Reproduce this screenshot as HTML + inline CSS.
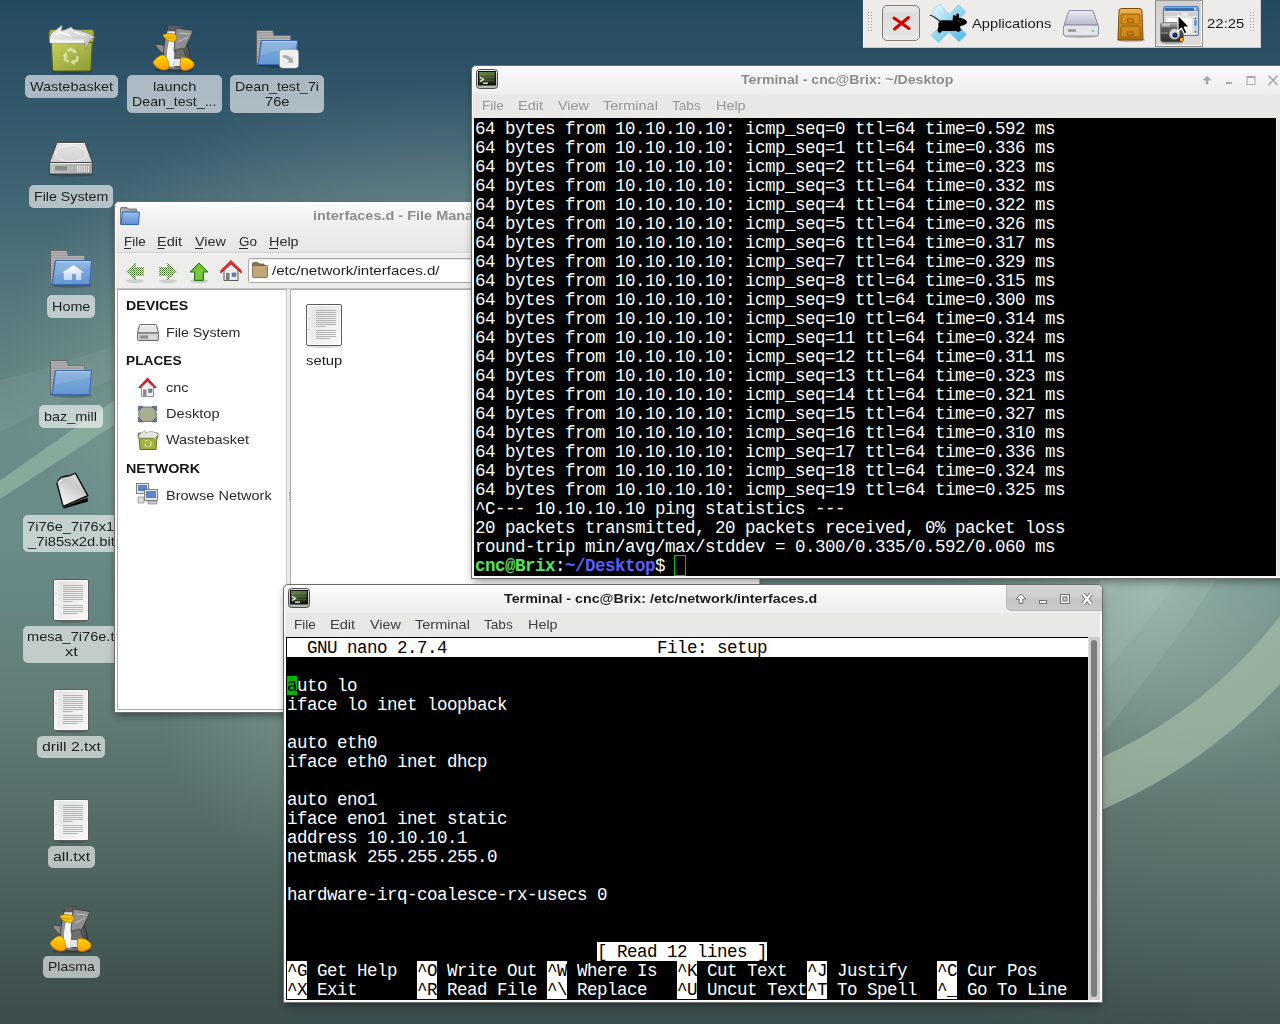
<!DOCTYPE html><html><head><meta charset="utf-8"><style>

*{box-sizing:border-box}
html,body{margin:0;padding:0;width:1280px;height:1024px;overflow:hidden}
body{position:relative;font-family:'Liberation Sans', sans-serif;background:#3c4e4d}
.a{position:absolute}
.t{position:absolute;white-space:pre;font-family:'Liberation Sans', sans-serif}
.m{position:absolute;white-space:pre;font-family:'Liberation Mono', monospace;font-size:17.5px;letter-spacing:-0.5px;line-height:19px;color:#fff}

</style></head><body>
<svg class="a" style="left:0;top:0" width="1280" height="1024" viewBox="0 0 1280 1024">
<defs>
<linearGradient id="bgv" x1="0" y1="0" x2="0" y2="1024" gradientUnits="userSpaceOnUse">
<stop offset="0.0000" stop-color="#244a62"/>
<stop offset="0.0439" stop-color="#2a4f65"/>
<stop offset="0.1416" stop-color="#385d6e"/>
<stop offset="0.2881" stop-color="#54777d"/>
<stop offset="0.3516" stop-color="#5f8282"/>
<stop offset="0.4199" stop-color="#6a8d8a"/>
<stop offset="0.5273" stop-color="#6a8c88"/>
<stop offset="0.5811" stop-color="#668784"/>
<stop offset="0.6787" stop-color="#637d78"/>
<stop offset="0.8350" stop-color="#516763"/>
<stop offset="0.9863" stop-color="#3c4e4d"/>
<stop offset="1.0000" stop-color="#3b4d4c"/>
</linearGradient>
<radialGradient id="glow" cx="1150" cy="590" r="210" gradientUnits="userSpaceOnUse">
<stop offset="0" stop-color="#b4d0c0" stop-opacity="0.5"/>
<stop offset="1" stop-color="#a8c4b4" stop-opacity="0"/>
</radialGradient>
<radialGradient id="glow2" cx="1280" cy="720" r="420" gradientUnits="userSpaceOnUse"><stop offset="0" stop-color="#c8e0d0" stop-opacity="0.12"/><stop offset="0.6" stop-color="#c8e0d0" stop-opacity="0.06"/><stop offset="1" stop-color="#c8e0d0" stop-opacity="0"/></radialGradient>
<radialGradient id="glow3" cx="310" cy="715" r="150" gradientUnits="userSpaceOnUse"><stop offset="0" stop-color="#d8f0e0" stop-opacity="0.16"/><stop offset="1" stop-color="#d8f0e0" stop-opacity="0"/></radialGradient>
<radialGradient id="glow4" cx="480" cy="360" r="560" gradientUnits="userSpaceOnUse" gradientTransform="translate(480 360) scale(1 0.589) translate(-480 -360)"><stop offset="0" stop-color="#f0f0d0" stop-opacity="0.4"/><stop offset="0.85" stop-color="#f0f0d0" stop-opacity="0"/></radialGradient>
<filter id="soft" x="-5%" y="-5%" width="110%" height="110%"><feGaussianBlur stdDeviation="0.6"/></filter>
</defs>
<rect width="1280" height="1024" fill="url(#bgv)"/>
<rect width="1280" height="1024" fill="url(#glow)"/>
<rect width="1280" height="1024" fill="url(#glow2)"/>
<rect width="1280" height="1024" fill="url(#glow3)"/>
<rect width="1280" height="1024" fill="url(#glow4)"/>
<path d="M0 380 C40 370 80 358 130 340 L130 372 C80 392 40 412 0 432Z" fill="#ffffff" fill-opacity="0.05"/>
<path d="M-20 494.5 L0 480.5 L300 270 L300 304 L0 499 L-20 512Z" fill="#8fb2a0" fill-opacity="0.8" filter="url(#soft)"/>
<path d="M1100 738 C1130 700 1170 650 1219 576 L1100 576Z" fill="#ffffff" fill-opacity="0.07" filter="url(#soft)"/>
<path d="M1100 677 C1125 648 1155 615 1181 576 L1100 576Z" fill="#ffffff" fill-opacity="0.05" filter="url(#soft)"/>
<path d="M1100 609 C1108 600 1117 590 1125 576 L1100 576Z" fill="#ffffff" fill-opacity="0.04"/>
<path d="M1000 790 A467 467 0 0 0 1310 572 L1310 648 A514.2 514.2 0 0 1 1000 840.9 Z" fill="#a2baa6" fill-opacity="0.72" filter="url(#soft)"/>
</svg>
<svg class="a" style="left:44px;top:22px;overflow:visible" width="56" height="52" viewBox="0 0 56 52"><defs><linearGradient id="trg" x1="0" y1="0" x2="1" y2="1"><stop offset="0" stop-color="#c6cf5c"/><stop offset="1" stop-color="#8e9a34"/></linearGradient>
<linearGradient id="tpg" x1="0" y1="0" x2="1" y2="1"><stop offset="0" stop-color="#fafafa"/><stop offset="1" stop-color="#b8b8b8"/></linearGradient></defs>
<ellipse cx="28" cy="49.5" rx="20" ry="2" fill="#000" fill-opacity="0.2"/>
<rect x="5" y="7.5" width="45" height="13" rx="2.5" fill="#a7b23e" stroke="#56620e" stroke-width="1"/>
<path d="M7.3 20.5 L48.3 20.5 L47 47 Q46.8 49 44.8 49 L10.6 49 Q8.6 49 8.5 47 Z" fill="url(#trg)" stroke="#56620e" stroke-width="1"/>
<path d="M5.5 17 C6 12 9 9 12 8 L18 3 L17.5 9 C20 8 24 7 27 5 C28 6.5 30 7.5 32 8 C36 8 40 10 44 11 C46.5 12 48.5 13.5 50.5 15 L46.5 18 C44.5 20 43.5 24 42 27.5 L40.5 21 L6 21 Z" fill="url(#tpg)" stroke="#8a8a8a" stroke-width="0.7"/>
<path d="M12 12 C16 10 22 11 26 14 M30 10 C34 12 38 12 42 14" stroke="#fff" stroke-width="1.2" fill="none"/>
<rect x="6" y="17.5" width="34" height="3.5" fill="#f2f2f2"/>
<g fill="none" stroke="#dfe5b0" stroke-width="2.6" stroke-opacity="0.85">
<path d="M23.5 29 L27 27 L30.5 29.5"/><path d="M33.5 34 L33 38.5 L29 40"/><path d="M24.5 40 L21 37.5 L21.5 33"/></g>
<g fill="#dfe5b0" fill-opacity="0.85"><path d="M30 26.5 L33.5 31 L28.5 31Z"/><path d="M30.5 43 L26 40 L30.5 37.5Z"/><path d="M18.5 34.5 L21.5 30 L24 34.5Z"/></g></svg>
<div class="a" style="left:25px;top:75px;width:93px;height:23px;border-radius:5px;background:rgba(255,255,255,0.6)"></div>
<div class="t" style="left:30.00px;top:79.67px;font-size:13.39px;line-height:13.39px;font-weight:normal;color:#1e1e1e;transform:scaleX(1.0795);transform-origin:0 0;">Wastebasket</div>
<svg class="a" style="left:148px;top:22px;overflow:visible" width="52" height="52" viewBox="0 0 52 52"><defs><linearGradient id="pgf" x1="0" y1="0" x2="0" y2="1"><stop offset="0" stop-color="#ffd800"/><stop offset="1" stop-color="#ff9c00"/></linearGradient>
<linearGradient id="pgb" x1="0" y1="0" x2="1" y2="0"><stop offset="0" stop-color="#9a9a9a"/><stop offset="1" stop-color="#4a4a4a"/></linearGradient></defs>
<ellipse cx="27" cy="48" rx="20" ry="2.5" fill="#000" fill-opacity="0.2"/>
<path d="M7 22 L18 23.5 L16 32 C12 30 9 26 7 22Z" fill="#8c8c8c" stroke="#333" stroke-width="0.6"/>
<path d="M19 9 C20 4 25 3 29 3.5 C33 4 35 7 35 11 L38 20 C42 28 43 36 42 43 C40 47 36 48 28 48 C21 48 17 46 16 40 C15 30 16 20 19 9Z" fill="url(#pgb)" stroke="#2a2a2a" stroke-width="0.8"/>
<path d="M20 4.5 C23 3 31 3 34 6 L34 10 L20 10Z" fill="#5c5c5c"/>
<path d="M19 9 L31 9 L31 13 L19 13Z" fill="#e6e6e6" stroke="#555" stroke-width="0.6"/>
<path d="M21 19 C19 27 18 36 20 44 L26 45 C28 36 29 27 28 19Z" fill="#f6f6f6"/>
<path d="M28 6 L45 8.5 L43 14 L35 30 L28 33 L26 28 Z" fill="#8e8e8e" stroke="#3a3a3a" stroke-width="0.8"/>
<path d="M31 11 L42 12 M30 20 L40 15" stroke="#d8d8d8" stroke-width="0.7"/>
<path d="M27 28 L35 26 L38 35 L33 45 L26 44 Z" fill="#6e6e6e" stroke="#333" stroke-width="0.6"/>
<rect x="26" y="37" width="6" height="7" fill="#e8e8e8"/>
<path d="M15 13 C18 11 25 11 28 13 C29 16 28 19 26 19.5 C21 19.5 17 18 15 13Z" fill="#f6c400" stroke="#b07800" stroke-width="0.7"/>
<path d="M17 15.5 L27 16" stroke="#b07800" stroke-width="0.6"/>
<path d="M5 40 C8 36 12 33 15 33 C19 34 21 40 21 44 C21 47 19 48 15 48 C10 47 6 44 5 40Z" fill="url(#pgf)" stroke="#c07000" stroke-width="0.6"/>
<path d="M33 36 C37 35 41 36 43 38 C46 40 47 43 45 45 C42 48 37 49 34 48 C32 46 32 40 33 36Z" fill="url(#pgf)" stroke="#c07000" stroke-width="0.6"/></svg>
<div class="a" style="left:127px;top:75px;width:95px;height:38px;border-radius:5px;background:rgba(255,255,255,0.6)"></div>
<div class="t" style="left:152.78px;top:79.67px;font-size:13.39px;line-height:13.39px;font-weight:normal;color:#1e1e1e;transform:scaleX(1.1011);transform-origin:0 0;">launch</div>
<div class="t" style="left:132.21px;top:94.67px;font-size:13.39px;line-height:13.39px;font-weight:normal;color:#1e1e1e;transform:scaleX(1.0619);transform-origin:0 0;">Dean_test_...</div>
<svg class="a" style="left:256px;top:30px;overflow:visible" width="42" height="37" viewBox="0 0 42 37"><defs><linearGradient id="fdb" x1="0" y1="0" x2="0" y2="1"><stop offset="0" stop-color="#86b0de"/><stop offset="1" stop-color="#6497d2"/></linearGradient>
<clipPath id="fbk"><path d="M0.5 1.5 Q0.5 0.5 1.5 0.5 L16.5 0.5 L18 5.5 L33.5 5.5 Q34.5 5.5 34.5 6.5 L34.5 11 L5 11 L2 34.5 L0.5 34.5 Z"/></clipPath></defs>
<ellipse cx="22" cy="35.5" rx="20" ry="2.2" fill="#000" fill-opacity="0.22"/>
<path d="M0.5 1.5 Q0.5 0.5 1.5 0.5 L16.5 0.5 L18 5.5 L33.5 5.5 Q34.5 5.5 34.5 6.5 L34.5 11 L5 11 L2 34.5 L0.5 34.5 Z" fill="#8e8e8e" stroke="#5e5e5e" stroke-width="0.8"/>
<g clip-path="url(#fbk)" stroke="#c8c8c8" stroke-width="0.7"><line x1="1" y1="1.5" x2="35" y2="1.5"/><line x1="1" y1="3.1" x2="35" y2="3.1"/><line x1="1" y1="4.7" x2="35" y2="4.7"/><line x1="1" y1="6.3" x2="35" y2="6.3"/><line x1="1" y1="7.9" x2="35" y2="7.9"/><line x1="1" y1="9.5" x2="35" y2="9.5"/><line x1="1" y1="11.1" x2="35" y2="11.1"/><line x1="1" y1="12.7" x2="35" y2="12.7"/><line x1="1" y1="14.3" x2="35" y2="14.3"/><line x1="1" y1="15.9" x2="35" y2="15.9"/><line x1="1" y1="17.5" x2="35" y2="17.5"/><line x1="1" y1="19.1" x2="35" y2="19.1"/><line x1="1" y1="20.7" x2="35" y2="20.7"/><line x1="1" y1="22.3" x2="35" y2="22.3"/><line x1="1" y1="23.9" x2="35" y2="23.9"/><line x1="1" y1="25.5" x2="35" y2="25.5"/><line x1="1" y1="27.1" x2="35" y2="27.1"/><line x1="1" y1="28.7" x2="35" y2="28.7"/><line x1="1" y1="30.3" x2="35" y2="30.3"/><line x1="1" y1="31.9" x2="35" y2="31.9"/></g>
<path d="M5.5 10.5 L41.5 10.5 L39.5 34.5 L2 34.5 Z" fill="url(#fdb)" stroke="#3766b2" stroke-width="1" stroke-linejoin="round"/>
<path d="M6.3 11.6 L40.4 11.6" stroke="#c4daf2" stroke-width="0.9"/>
<path d="M6.2 12 L40.5 12 L40 17 C30 19 16 22 4.8 25 Z" fill="#fff" fill-opacity="0.1"/>
<rect x="23.5" y="19.5" width="19" height="18.5" rx="3" fill="#efefef" stroke="#9c9c9c" stroke-width="0.8"/>
<rect x="24.5" y="20.5" width="17" height="16.5" rx="2.5" fill="none" stroke="#fff" stroke-width="1"/>
<path d="M26.5 25.5 Q31 23.5 35 28 L36 26.5 L37.5 33 L31.5 32.5 L33 30.8 Q30 27.5 27 27.5 Z" fill="#ababab"/></svg>
<div class="a" style="left:230px;top:75px;width:94px;height:38px;border-radius:5px;background:rgba(255,255,255,0.6)"></div>
<div class="t" style="left:234.97px;top:79.67px;font-size:13.39px;line-height:13.39px;font-weight:normal;color:#1e1e1e;transform:scaleX(1.0654);transform-origin:0 0;">Dean_test_7i</div>
<div class="t" style="left:264.73px;top:94.67px;font-size:13.39px;line-height:13.39px;font-weight:normal;color:#1e1e1e;transform:scaleX(1.0986);transform-origin:0 0;">76e</div>
<svg class="a" style="left:44px;top:136px;overflow:visible" width="56" height="46" viewBox="0 0 56 46"><defs><linearGradient id="drg" x1="0" y1="0" x2="0" y2="1"><stop offset="0" stop-color="#e4e4e4"/><stop offset="1" stop-color="#d2d2d2"/></linearGradient>
<linearGradient id="drf" x1="0" y1="0" x2="1" y2="0"><stop offset="0" stop-color="#c2c2c2"/><stop offset="1" stop-color="#a6a6a6"/></linearGradient></defs>
<ellipse cx="27" cy="38.5" rx="23" ry="2.2" fill="#000" fill-opacity="0.22"/>
<path d="M13 6.5 L41 6.5 L48.5 26.5 L5.5 26.5 Z" fill="url(#drg)" stroke="#3c3c3c" stroke-width="0.9" stroke-linejoin="round"/>
<path d="M13.6 7.5 L40.4 7.5" stroke="#fff" stroke-width="1"/>
<ellipse cx="27" cy="17.5" rx="15.5" ry="8" fill="none" stroke="#f4f4f4" stroke-width="0.8"/>
<rect x="5.5" y="26.5" width="43" height="11.5" rx="1.5" fill="url(#drf)" stroke="#3c3c3c" stroke-width="0.9"/>
<path d="M6.5 27.5 L47.5 27.5" stroke="#f0f0f0" stroke-width="1"/>
<rect x="11" y="30" width="12" height="4.5" fill="#8a8a8a"/>
<g stroke="#f2f2f2" stroke-width="0.8"><line x1="33.5" y1="29.5" x2="33.5" y2="36"/><line x1="35.7" y1="29.5" x2="35.7" y2="36"/><line x1="37.9" y1="29.5" x2="37.9" y2="36"/><line x1="40.1" y1="29.5" x2="40.1" y2="36"/><line x1="42.3" y1="29.5" x2="42.3" y2="36"/><line x1="44.5" y1="29.5" x2="44.5" y2="36"/></g></svg>
<div class="a" style="left:29px;top:185px;width:84px;height:23px;border-radius:5px;background:rgba(255,255,255,0.6)"></div>
<div class="t" style="left:33.82px;top:189.67px;font-size:13.39px;line-height:13.39px;font-weight:normal;color:#1e1e1e;transform:scaleX(1.0633);transform-origin:0 0;">File System</div>
<svg class="a" style="left:50px;top:250px;overflow:visible" width="42" height="37" viewBox="0 0 42 37"><defs><linearGradient id="fdb" x1="0" y1="0" x2="0" y2="1"><stop offset="0" stop-color="#86b0de"/><stop offset="1" stop-color="#6497d2"/></linearGradient>
<clipPath id="fbk"><path d="M0.5 1.5 Q0.5 0.5 1.5 0.5 L16.5 0.5 L18 5.5 L33.5 5.5 Q34.5 5.5 34.5 6.5 L34.5 11 L5 11 L2 34.5 L0.5 34.5 Z"/></clipPath></defs>
<ellipse cx="22" cy="35.5" rx="20" ry="2.2" fill="#000" fill-opacity="0.22"/>
<path d="M0.5 1.5 Q0.5 0.5 1.5 0.5 L16.5 0.5 L18 5.5 L33.5 5.5 Q34.5 5.5 34.5 6.5 L34.5 11 L5 11 L2 34.5 L0.5 34.5 Z" fill="#8e8e8e" stroke="#5e5e5e" stroke-width="0.8"/>
<g clip-path="url(#fbk)" stroke="#c8c8c8" stroke-width="0.7"><line x1="1" y1="1.5" x2="35" y2="1.5"/><line x1="1" y1="3.1" x2="35" y2="3.1"/><line x1="1" y1="4.7" x2="35" y2="4.7"/><line x1="1" y1="6.3" x2="35" y2="6.3"/><line x1="1" y1="7.9" x2="35" y2="7.9"/><line x1="1" y1="9.5" x2="35" y2="9.5"/><line x1="1" y1="11.1" x2="35" y2="11.1"/><line x1="1" y1="12.7" x2="35" y2="12.7"/><line x1="1" y1="14.3" x2="35" y2="14.3"/><line x1="1" y1="15.9" x2="35" y2="15.9"/><line x1="1" y1="17.5" x2="35" y2="17.5"/><line x1="1" y1="19.1" x2="35" y2="19.1"/><line x1="1" y1="20.7" x2="35" y2="20.7"/><line x1="1" y1="22.3" x2="35" y2="22.3"/><line x1="1" y1="23.9" x2="35" y2="23.9"/><line x1="1" y1="25.5" x2="35" y2="25.5"/><line x1="1" y1="27.1" x2="35" y2="27.1"/><line x1="1" y1="28.7" x2="35" y2="28.7"/><line x1="1" y1="30.3" x2="35" y2="30.3"/><line x1="1" y1="31.9" x2="35" y2="31.9"/></g>
<path d="M5.5 10.5 L41.5 10.5 L39.5 34.5 L2 34.5 Z" fill="url(#fdb)" stroke="#3766b2" stroke-width="1" stroke-linejoin="round"/>
<path d="M6.3 11.6 L40.4 11.6" stroke="#c4daf2" stroke-width="0.9"/>
<path d="M6.2 12 L40.5 12 L40 17 C30 19 16 22 4.8 25 Z" fill="#fff" fill-opacity="0.1"/>
<defs><linearGradient id="hmg" x1="0" y1="0" x2="0" y2="1"><stop offset="0" stop-color="#fff"/><stop offset="1" stop-color="#c2d6ee"/></linearGradient></defs><path d="M23.5 15 L34 22.5 L31.2 22.5 L31.2 30 L26 30 L26 24 L22 24 L22 30 L13.8 30 L13.8 22.5 L12.3 22.5 Z" fill="url(#hmg)"/></svg>
<div class="a" style="left:47px;top:295px;width:48px;height:23px;border-radius:5px;background:rgba(255,255,255,0.6)"></div>
<div class="t" style="left:51.80px;top:299.67px;font-size:13.39px;line-height:13.39px;font-weight:normal;color:#1e1e1e;transform:scaleX(1.0750);transform-origin:0 0;">Home</div>
<svg class="a" style="left:50px;top:360px;overflow:visible" width="42" height="37" viewBox="0 0 42 37"><defs><linearGradient id="fdb" x1="0" y1="0" x2="0" y2="1"><stop offset="0" stop-color="#86b0de"/><stop offset="1" stop-color="#6497d2"/></linearGradient>
<clipPath id="fbk"><path d="M0.5 1.5 Q0.5 0.5 1.5 0.5 L16.5 0.5 L18 5.5 L33.5 5.5 Q34.5 5.5 34.5 6.5 L34.5 11 L5 11 L2 34.5 L0.5 34.5 Z"/></clipPath></defs>
<ellipse cx="22" cy="35.5" rx="20" ry="2.2" fill="#000" fill-opacity="0.22"/>
<path d="M0.5 1.5 Q0.5 0.5 1.5 0.5 L16.5 0.5 L18 5.5 L33.5 5.5 Q34.5 5.5 34.5 6.5 L34.5 11 L5 11 L2 34.5 L0.5 34.5 Z" fill="#8e8e8e" stroke="#5e5e5e" stroke-width="0.8"/>
<g clip-path="url(#fbk)" stroke="#c8c8c8" stroke-width="0.7"><line x1="1" y1="1.5" x2="35" y2="1.5"/><line x1="1" y1="3.1" x2="35" y2="3.1"/><line x1="1" y1="4.7" x2="35" y2="4.7"/><line x1="1" y1="6.3" x2="35" y2="6.3"/><line x1="1" y1="7.9" x2="35" y2="7.9"/><line x1="1" y1="9.5" x2="35" y2="9.5"/><line x1="1" y1="11.1" x2="35" y2="11.1"/><line x1="1" y1="12.7" x2="35" y2="12.7"/><line x1="1" y1="14.3" x2="35" y2="14.3"/><line x1="1" y1="15.9" x2="35" y2="15.9"/><line x1="1" y1="17.5" x2="35" y2="17.5"/><line x1="1" y1="19.1" x2="35" y2="19.1"/><line x1="1" y1="20.7" x2="35" y2="20.7"/><line x1="1" y1="22.3" x2="35" y2="22.3"/><line x1="1" y1="23.9" x2="35" y2="23.9"/><line x1="1" y1="25.5" x2="35" y2="25.5"/><line x1="1" y1="27.1" x2="35" y2="27.1"/><line x1="1" y1="28.7" x2="35" y2="28.7"/><line x1="1" y1="30.3" x2="35" y2="30.3"/><line x1="1" y1="31.9" x2="35" y2="31.9"/></g>
<path d="M5.5 10.5 L41.5 10.5 L39.5 34.5 L2 34.5 Z" fill="url(#fdb)" stroke="#3766b2" stroke-width="1" stroke-linejoin="round"/>
<path d="M6.3 11.6 L40.4 11.6" stroke="#c4daf2" stroke-width="0.9"/>
<path d="M6.2 12 L40.5 12 L40 17 C30 19 16 22 4.8 25 Z" fill="#fff" fill-opacity="0.1"/>
</svg>
<div class="a" style="left:39px;top:405px;width:64px;height:23px;border-radius:5px;background:rgba(255,255,255,0.6)"></div>
<div class="t" style="left:44.48px;top:409.67px;font-size:13.39px;line-height:13.39px;font-weight:normal;color:#1e1e1e;transform:scaleX(1.0800);transform-origin:0 0;">baz_mill</div>
<svg class="a" style="left:48px;top:466px;overflow:visible" width="48" height="48" viewBox="0 0 48 48"><defs><linearGradient id="bfg" x1="0.2" y1="1" x2="0.8" y2="0"><stop offset="0" stop-color="#ffffff"/><stop offset="0.6" stop-color="#c8c8c8"/><stop offset="1" stop-color="#e0e0e0"/></linearGradient></defs>
<path d="M15 41.5 L39.5 31.5 L40 35.5 L16 42.5 Z" fill="#000"/>
<path d="M9 17.5 C10 14.5 12 12 14 11 L22 9.5 L27.5 7.2 L39.8 29.6 L15.2 40.3 Z" fill="url(#bfg)" stroke="#000" stroke-width="1.3" stroke-linejoin="round"/>
<path d="M9.3 17 C11 14.5 12.5 13 14 12.5 L14.5 15.5 C12.5 16.5 10.5 17.5 9.3 17Z" fill="#fff" stroke="#888" stroke-width="0.5"/></svg>
<div class="a" style="left:23px;top:515px;width:97px;height:37px;border-radius:5px;background:rgba(255,255,255,0.6)"></div>
<div class="t" style="left:27.34px;top:519.67px;font-size:13.39px;line-height:13.39px;font-weight:normal;color:#1e1e1e;transform:scaleX(1.0961);transform-origin:0 0;">7i76e_7i76x1</div>
<div class="t" style="left:27.50px;top:534.67px;font-size:13.39px;line-height:13.39px;font-weight:normal;color:#1e1e1e;transform:scaleX(1.1027);transform-origin:0 0;">_7i85sx2d.bit</div>
<svg class="a" style="left:53px;top:579px;overflow:visible" width="36" height="42" viewBox="0 0 36 42"><defs><linearGradient id="tdg" x1="0" y1="0" x2="1" y2="1"><stop offset="0" stop-color="#e2e2e2"/><stop offset="1" stop-color="#f8f8f8"/></linearGradient></defs>
<ellipse cx="18" cy="42" rx="16" ry="2" fill="#000" fill-opacity="0.15"/>
<rect x="0.5" y="0.5" width="35" height="41" rx="1.5" fill="#fff" stroke="#5c5c5c" stroke-width="1"/>
<rect x="2" y="2" width="32" height="38" fill="url(#tdg)"/>
<rect x="2" y="2" width="3.5" height="38" fill="#fff" fill-opacity="0.35"/>
<g stroke="#b4b4b4" stroke-width="1"><line x1="10" y1="6.5" x2="30" y2="6.5"/><line x1="10" y1="8.5" x2="30" y2="8.5"/><line x1="10" y1="10.5" x2="30" y2="10.5"/><line x1="10" y1="12.5" x2="30" y2="12.5"/><line x1="10" y1="14.5" x2="30" y2="14.5"/><line x1="10" y1="16.5" x2="30" y2="16.5"/><line x1="10" y1="18.5" x2="30" y2="18.5"/><line x1="10" y1="20.5" x2="30" y2="20.5"/><line x1="10" y1="22.5" x2="19.5" y2="22.5"/><line x1="10" y1="26.5" x2="30" y2="26.5"/><line x1="10" y1="28.5" x2="30" y2="28.5"/><line x1="10" y1="30.5" x2="30" y2="30.5"/><line x1="10" y1="32.5" x2="30" y2="32.5"/><line x1="10" y1="34.5" x2="24.5" y2="34.5"/></g>
<rect x="2.5" y="14" width="1" height="1" fill="#aaa"/><rect x="2.5" y="25" width="1" height="1" fill="#aaa"/></svg>
<div class="a" style="left:23px;top:626px;width:97px;height:37px;border-radius:5px;background:rgba(255,255,255,0.6)"></div>
<div class="t" style="left:27.22px;top:629.67px;font-size:13.39px;line-height:13.39px;font-weight:normal;color:#1e1e1e;transform:scaleX(1.0892);transform-origin:0 0;">mesa_7i76e.t</div>
<div class="t" style="left:64.60px;top:644.67px;font-size:13.39px;line-height:13.39px;font-weight:normal;color:#1e1e1e;transform:scaleX(1.2281);transform-origin:0 0;">xt</div>
<svg class="a" style="left:53px;top:689px;overflow:visible" width="36" height="42" viewBox="0 0 36 42"><defs><linearGradient id="tdg" x1="0" y1="0" x2="1" y2="1"><stop offset="0" stop-color="#e2e2e2"/><stop offset="1" stop-color="#f8f8f8"/></linearGradient></defs>
<ellipse cx="18" cy="42" rx="16" ry="2" fill="#000" fill-opacity="0.15"/>
<rect x="0.5" y="0.5" width="35" height="41" rx="1.5" fill="#fff" stroke="#5c5c5c" stroke-width="1"/>
<rect x="2" y="2" width="32" height="38" fill="url(#tdg)"/>
<rect x="2" y="2" width="3.5" height="38" fill="#fff" fill-opacity="0.35"/>
<g stroke="#b4b4b4" stroke-width="1"><line x1="10" y1="6.5" x2="30" y2="6.5"/><line x1="10" y1="8.5" x2="30" y2="8.5"/><line x1="10" y1="10.5" x2="30" y2="10.5"/><line x1="10" y1="12.5" x2="30" y2="12.5"/><line x1="10" y1="14.5" x2="30" y2="14.5"/><line x1="10" y1="16.5" x2="30" y2="16.5"/><line x1="10" y1="18.5" x2="30" y2="18.5"/><line x1="10" y1="20.5" x2="30" y2="20.5"/><line x1="10" y1="22.5" x2="19.5" y2="22.5"/><line x1="10" y1="26.5" x2="30" y2="26.5"/><line x1="10" y1="28.5" x2="30" y2="28.5"/><line x1="10" y1="30.5" x2="30" y2="30.5"/><line x1="10" y1="32.5" x2="30" y2="32.5"/><line x1="10" y1="34.5" x2="24.5" y2="34.5"/></g>
<rect x="2.5" y="14" width="1" height="1" fill="#aaa"/><rect x="2.5" y="25" width="1" height="1" fill="#aaa"/></svg>
<div class="a" style="left:37px;top:736px;width:68px;height:22px;border-radius:5px;background:rgba(255,255,255,0.6)"></div>
<div class="t" style="left:41.57px;top:739.67px;font-size:13.39px;line-height:13.39px;font-weight:normal;color:#1e1e1e;transform:scaleX(1.1806);transform-origin:0 0;">drill 2.txt</div>
<svg class="a" style="left:53px;top:799px;overflow:visible" width="36" height="42" viewBox="0 0 36 42"><defs><linearGradient id="tdg" x1="0" y1="0" x2="1" y2="1"><stop offset="0" stop-color="#e2e2e2"/><stop offset="1" stop-color="#f8f8f8"/></linearGradient></defs>
<ellipse cx="18" cy="42" rx="16" ry="2" fill="#000" fill-opacity="0.15"/>
<rect x="0.5" y="0.5" width="35" height="41" rx="1.5" fill="#fff" stroke="#5c5c5c" stroke-width="1"/>
<rect x="2" y="2" width="32" height="38" fill="url(#tdg)"/>
<rect x="2" y="2" width="3.5" height="38" fill="#fff" fill-opacity="0.35"/>
<g stroke="#b4b4b4" stroke-width="1"><line x1="10" y1="6.5" x2="30" y2="6.5"/><line x1="10" y1="8.5" x2="30" y2="8.5"/><line x1="10" y1="10.5" x2="30" y2="10.5"/><line x1="10" y1="12.5" x2="30" y2="12.5"/><line x1="10" y1="14.5" x2="30" y2="14.5"/><line x1="10" y1="16.5" x2="30" y2="16.5"/><line x1="10" y1="18.5" x2="30" y2="18.5"/><line x1="10" y1="20.5" x2="30" y2="20.5"/><line x1="10" y1="22.5" x2="19.5" y2="22.5"/><line x1="10" y1="26.5" x2="30" y2="26.5"/><line x1="10" y1="28.5" x2="30" y2="28.5"/><line x1="10" y1="30.5" x2="30" y2="30.5"/><line x1="10" y1="32.5" x2="30" y2="32.5"/><line x1="10" y1="34.5" x2="24.5" y2="34.5"/></g>
<rect x="2.5" y="14" width="1" height="1" fill="#aaa"/><rect x="2.5" y="25" width="1" height="1" fill="#aaa"/></svg>
<div class="a" style="left:48px;top:846px;width:47px;height:22px;border-radius:5px;background:rgba(255,255,255,0.6)"></div>
<div class="t" style="left:52.90px;top:849.67px;font-size:13.39px;line-height:13.39px;font-weight:normal;color:#1e1e1e;transform:scaleX(1.1906);transform-origin:0 0;">all.txt</div>
<svg class="a" style="left:45px;top:903px;overflow:visible" width="52" height="52" viewBox="0 0 52 52"><defs><linearGradient id="pgf" x1="0" y1="0" x2="0" y2="1"><stop offset="0" stop-color="#ffd800"/><stop offset="1" stop-color="#ff9c00"/></linearGradient>
<linearGradient id="pgb" x1="0" y1="0" x2="1" y2="0"><stop offset="0" stop-color="#9a9a9a"/><stop offset="1" stop-color="#4a4a4a"/></linearGradient></defs>
<ellipse cx="27" cy="48" rx="20" ry="2.5" fill="#000" fill-opacity="0.2"/>
<path d="M7 22 L18 23.5 L16 32 C12 30 9 26 7 22Z" fill="#8c8c8c" stroke="#333" stroke-width="0.6"/>
<path d="M19 9 C20 4 25 3 29 3.5 C33 4 35 7 35 11 L38 20 C42 28 43 36 42 43 C40 47 36 48 28 48 C21 48 17 46 16 40 C15 30 16 20 19 9Z" fill="url(#pgb)" stroke="#2a2a2a" stroke-width="0.8"/>
<path d="M20 4.5 C23 3 31 3 34 6 L34 10 L20 10Z" fill="#5c5c5c"/>
<path d="M19 9 L31 9 L31 13 L19 13Z" fill="#e6e6e6" stroke="#555" stroke-width="0.6"/>
<path d="M21 19 C19 27 18 36 20 44 L26 45 C28 36 29 27 28 19Z" fill="#f6f6f6"/>
<path d="M28 6 L45 8.5 L43 14 L35 30 L28 33 L26 28 Z" fill="#8e8e8e" stroke="#3a3a3a" stroke-width="0.8"/>
<path d="M31 11 L42 12 M30 20 L40 15" stroke="#d8d8d8" stroke-width="0.7"/>
<path d="M27 28 L35 26 L38 35 L33 45 L26 44 Z" fill="#6e6e6e" stroke="#333" stroke-width="0.6"/>
<rect x="26" y="37" width="6" height="7" fill="#e8e8e8"/>
<path d="M15 13 C18 11 25 11 28 13 C29 16 28 19 26 19.5 C21 19.5 17 18 15 13Z" fill="#f6c400" stroke="#b07800" stroke-width="0.7"/>
<path d="M17 15.5 L27 16" stroke="#b07800" stroke-width="0.6"/>
<path d="M5 40 C8 36 12 33 15 33 C19 34 21 40 21 44 C21 47 19 48 15 48 C10 47 6 44 5 40Z" fill="url(#pgf)" stroke="#c07000" stroke-width="0.6"/>
<path d="M33 36 C37 35 41 36 43 38 C46 40 47 43 45 45 C42 48 37 49 34 48 C32 46 32 40 33 36Z" fill="url(#pgf)" stroke="#c07000" stroke-width="0.6"/></svg>
<div class="a" style="left:43px;top:956px;width:57px;height:22px;border-radius:5px;background:rgba(255,255,255,0.6)"></div>
<div class="t" style="left:48.09px;top:959.67px;font-size:13.39px;line-height:13.39px;font-weight:normal;color:#1e1e1e;transform:scaleX(1.0486);transform-origin:0 0;">Plasma</div>
<div class="a" style="left:114px;top:201px;width:644px;height:512px;border:1px solid #6c6c6c;border-radius:5px 5px 0 0;background:#fdfdfd;box-shadow:0 4px 8px -2px rgba(0,0,0,0.45);"></div><div class="a" style="left:116px;top:203px;width:640px;height:50px;border-radius:4px 4px 0 0;background:linear-gradient(#fafafa,#f1f1f1 30%,#ececec 60%,#e6e6e5);border-top:1px solid #fff;border-bottom:1px solid #cfcfcf"></div><svg class="a" style="left:120px;top:207px;overflow:visible" width="20" height="18" viewBox="0 0 20 18"><defs><linearGradient id="ffg" x1="0" y1="0" x2="0" y2="1"><stop offset="0" stop-color="#9cc0ec"/><stop offset="1" stop-color="#5a8fd2"/></linearGradient></defs>
<path d="M0.5 1.5 Q0.5 0.5 1.5 0.5 L7 0.5 L8.5 2 L16.5 2 L16.5 6 L0.5 6Z" fill="#9a9a9a" stroke="#6a6a6a" stroke-width="0.8"/>
<path d="M0.5 1.5 L0.5 17.5 L3 17.5 L3 5 L17 5" fill="#b8b8b8" stroke="#6a6a6a" stroke-width="0.8"/>
<path d="M2.5 5 L19.5 5 L18.5 17.5 L1 17.5 Z" fill="url(#ffg)" stroke="#3168b0" stroke-width="1"/></svg><div class="t" style="left:312.80px;top:210.14px;font-size:12.36px;line-height:12.36px;font-weight:bold;color:#8d8d8d;transform:scaleX(1.1719);transform-origin:0 0;">interfaces.d - File Manager</div><div class="t" style="left:123.70px;top:235.07px;font-size:13.39px;line-height:13.39px;font-weight:normal;color:#2b2b2b;transform:scaleX(1.0083);transform-origin:0 0;">File</div><div class="t" style="left:157.20px;top:235.07px;font-size:13.39px;line-height:13.39px;font-weight:normal;color:#2b2b2b;transform:scaleX(1.0911);transform-origin:0 0;">Edit</div><div class="t" style="left:194.70px;top:235.07px;font-size:13.39px;line-height:13.39px;font-weight:normal;color:#2b2b2b;transform:scaleX(1.0719);transform-origin:0 0;">View</div><div class="t" style="left:238.70px;top:235.07px;font-size:13.39px;line-height:13.39px;font-weight:normal;color:#2b2b2b;transform:scaleX(1.0093);transform-origin:0 0;">Go</div><div class="t" style="left:268.70px;top:235.07px;font-size:13.39px;line-height:13.39px;font-weight:normal;color:#2b2b2b;transform:scaleX(1.0764);transform-origin:0 0;">Help</div><svg class="a" style="left:0;top:0;overflow:visible" width="1" height="1"><rect x="124" y="248" width="7" height="1" fill="#2b2b2b"/><rect x="157.5" y="248" width="7" height="1" fill="#2b2b2b"/><rect x="195" y="248" width="8" height="1" fill="#2b2b2b"/><rect x="239" y="248" width="9" height="1" fill="#2b2b2b"/><rect x="269" y="248" width="9" height="1" fill="#2b2b2b"/></svg><div class="a" style="left:116px;top:253px;width:640px;height:36px;background:#ededec;border-top:1px solid #fbfbfb;border-bottom:1px solid #c4c4c4"></div><svg class="a" style="left:0;top:0;overflow:visible" width="1" height="1"><defs><pattern id="dotp" width="2" height="2" patternUnits="userSpaceOnUse"><rect width="1" height="1" fill="#3a6a1e"/><rect x="1" y="1" width="1" height="1" fill="#6aa040"/></pattern></defs>
<ellipse cx="135" cy="281" rx="9" ry="2" fill="#000" fill-opacity="0.12"/>
<path d="M126 271.5 L136 262 L136 267 L144 267 L144 276 L136 276 L136 281 Z" fill="url(#dotp)"/>
<ellipse cx="168" cy="281" rx="9" ry="2" fill="#000" fill-opacity="0.12"/>
<path d="M177 271.5 L167 262 L167 267 L159 267 L159 276 L167 276 L167 281 Z" fill="url(#dotp)"/>
<ellipse cx="199" cy="281" rx="9" ry="2" fill="#000" fill-opacity="0.15"/>
<path d="M199 263 L208 272 L203.5 272 L203.5 280.5 L194.5 280.5 L194.5 272 L190 272 Z" fill="#62b82e" stroke="#2e7a12" stroke-width="1"/><path d="M199 265.5 L205 271 L202 271 L202 279 L196 279 L196 271 L193 271 Z" fill="#8ad04a" fill-opacity="0.6"/>
<path d="M224 270 L231 263.5 L238 270 L238 280.5 L224 280.5 Z" fill="#ececec" stroke="#5a5a5a" stroke-width="1"/>
<path d="M220.8 270.5 L231 260.5 L241.2 270.5 L241.2 273 L231 263.8 L220.8 273 Z" fill="#e83030" stroke="#a01010" stroke-width="0.8" stroke-linejoin="round"/>
<rect x="226" y="273" width="3.5" height="7.5" fill="#7c7c7c"/>
<rect x="232" y="273" width="4" height="3.5" fill="#5b86c4" stroke="#2a4a7a" stroke-width="0.4"/></svg><div class="a" style="left:248px;top:258px;width:520px;height:25px;background:#fff;border:1px solid #a9a9a9;border-radius:1.5px;box-shadow:inset 0 1px 1px rgba(0,0,0,0.08)"></div><svg class="a" style="left:252px;top:262px;overflow:visible" width="16" height="16" viewBox="0 0 16 16"><path d="M0.5 2 Q0.5 0.5 2 0.5 L6 0.5 L7.5 2 L12 2 L12 4 L0.5 4Z" fill="#8a7354" stroke="#6e5a3c" stroke-width="0.8"/>
<rect x="0.5" y="3.5" width="15" height="12" rx="1" fill="#c2a778" stroke="#6e5a3c" stroke-width="0.8"/></svg><div class="t" style="left:272.40px;top:263.67px;font-size:13.39px;line-height:13.39px;font-weight:normal;color:#1e1e1e;transform:scaleX(1.1267);transform-origin:0 0;">/etc/network/interfaces.d/</div><div class="a" style="left:117px;top:289px;width:170px;height:421px;background:#fff;border:1px solid #a9a9a9;border-right-color:#c7c7c7"></div><div class="a" style="left:287px;top:289px;width:4px;height:421px;background:#ededec"></div><div class="a" style="left:289px;top:492px;width:1px;height:8px;border-left:1px dotted #999"></div><div class="a" style="left:290px;top:289px;width:470px;height:421px;background:#fff;border:1px solid #a9a9a9"></div><div class="t" style="left:125.80px;top:299.27px;font-size:13.39px;line-height:13.39px;font-weight:bold;color:#141414;transform:scaleX(1.0607);transform-origin:0 0;">DEVICES</div><svg class="a" style="left:137px;top:324px;overflow:visible" width="22" height="17" viewBox="0 0 22 17"><path d="M3.5 0.5 L18.5 0.5 Q19.2 0.5 19.5 1.2 L21.5 9 L0.5 9 L2.5 1.2 Q2.8 0.5 3.5 0.5Z" fill="#e6e6e6" stroke="#5a5a5a" stroke-width="0.9"/>
<path d="M3.5 1.6 L18.5 1.6" stroke="#fff" stroke-width="0.8"/>
<rect x="0.5" y="9" width="21" height="7.5" rx="1.2" fill="#cdcdcd" stroke="#5a5a5a" stroke-width="0.9"/>
<rect x="3" y="11.5" width="8" height="3" fill="#8e8e8e"/>
<g stroke="#f4f4f4" stroke-width="0.6"><line x1="13.0" y1="11.5" x2="13.0" y2="15"/><line x1="14.4" y1="11.5" x2="14.4" y2="15"/><line x1="15.8" y1="11.5" x2="15.8" y2="15"/><line x1="17.2" y1="11.5" x2="17.2" y2="15"/><line x1="18.6" y1="11.5" x2="18.6" y2="15"/></g></svg><div class="t" style="left:165.70px;top:325.87px;font-size:13.39px;line-height:13.39px;font-weight:normal;color:#2a2a2a;transform:scaleX(1.0633);transform-origin:0 0;">File System</div><div class="t" style="left:125.80px;top:354.47px;font-size:13.39px;line-height:13.39px;font-weight:bold;color:#141414;transform:scaleX(1.0247);transform-origin:0 0;">PLACES</div><svg class="a" style="left:138px;top:377px;overflow:visible" width="19" height="20" viewBox="0 0 19 20"><path d="M0.8 10.5 L9.5 1 L18.2 10.5 L15.5 10.5 L9.5 4.5 L3.5 10.5 Z" fill="#e51c1c" stroke="#a00" stroke-width="0.8" stroke-linejoin="round"/>
<path d="M3.5 10 L9.5 4.5 L15.5 10 L15.5 19.5 L3.5 19.5 Z" fill="#f0f0f0" stroke="#7a7a7a" stroke-width="0.8"/>
<rect x="5" y="12.5" width="3.5" height="7" fill="#8c8c8c"/><rect x="10.5" y="12" width="3.5" height="3.5" fill="#5b86c4" stroke="#345" stroke-width="0.3"/></svg><div class="t" style="left:165.70px;top:380.87px;font-size:13.39px;line-height:13.39px;font-weight:normal;color:#2a2a2a;transform:scaleX(1.0815);transform-origin:0 0;">cnc</div><svg class="a" style="left:138px;top:406px;overflow:visible" width="19" height="16.5" viewBox="0 0 19 16.5"><path d="M4 1 L15 1 Q18.5 4 18.5 8 Q18.5 12 15 15.5 L4 15.5 Q0.5 12 0.5 8 Q0.5 4 4 1Z" fill="#a9ad92" stroke="#5f6350" stroke-width="0.8"/>
<path d="M0.3 0.3 L5 0.3 L0.3 5Z M18.7 0.3 L14 0.3 L18.7 5Z M0.3 16 L5 16 L0.3 11.3Z M18.7 16 L14 16 L18.7 11.3Z" fill="#5a7aa6" stroke="#2c4468" stroke-width="0.5"/></svg><div class="t" style="left:165.70px;top:406.97px;font-size:13.39px;line-height:13.39px;font-weight:normal;color:#2a2a2a;transform:scaleX(1.0915);transform-origin:0 0;">Desktop</div><svg class="a" style="left:137px;top:430px;overflow:visible" width="22" height="20" viewBox="0 0 22 20"><path d="M2 7 L20 7 L19 19.5 L3 19.5 Z" fill="#a4b03c" stroke="#56620e" stroke-width="0.9"/>
<rect x="1" y="3" width="20" height="5" rx="1" fill="#a0aa3a" stroke="#56620e" stroke-width="0.8"/>
<path d="M1.5 6.5 C3 3 6 2 8 0.5 L9 3 C11 2 13 1 15 1.5 C17 2 20 3 21.5 4.5 L19 7 L18.5 11 L17 8 L2 8Z" fill="#e4e4e4" stroke="#8a8a8a" stroke-width="0.5"/>
<circle cx="11" cy="13.5" r="3.2" fill="none" stroke="#d6dca0" stroke-width="1.4" stroke-dasharray="4 1.6"/></svg><div class="t" style="left:165.70px;top:433.07px;font-size:13.39px;line-height:13.39px;font-weight:normal;color:#2a2a2a;transform:scaleX(1.0795);transform-origin:0 0;">Wastebasket</div><div class="t" style="left:125.80px;top:461.97px;font-size:13.39px;line-height:13.39px;font-weight:bold;color:#141414;transform:scaleX(1.0712);transform-origin:0 0;">NETWORK</div><svg class="a" style="left:136px;top:483px;overflow:visible" width="22" height="22" viewBox="0 0 22 22"><rect x="0.5" y="0.5" width="12" height="10" fill="#e4e4e4" stroke="#666" stroke-width="0.8"/><rect x="2" y="2" width="9" height="6" fill="#5b86c4"/>
<rect x="8.5" y="6.5" width="13" height="11" fill="#e4e4e4" stroke="#666" stroke-width="0.8"/><rect x="10" y="8" width="10" height="7" fill="#5b86c4"/>
<rect x="2" y="14" width="6" height="6" fill="#ddd" stroke="#777" stroke-width="0.6"/><rect x="12" y="18" width="9" height="3" fill="#ccc" stroke="#777" stroke-width="0.6"/></svg><div class="t" style="left:165.70px;top:488.57px;font-size:13.39px;line-height:13.39px;font-weight:normal;color:#2a2a2a;transform:scaleX(1.0849);transform-origin:0 0;">Browse Network</div><svg class="a" style="left:306px;top:304px;overflow:visible" width="36" height="42" viewBox="0 0 36 42"><defs><linearGradient id="tdg" x1="0" y1="0" x2="1" y2="1"><stop offset="0" stop-color="#e2e2e2"/><stop offset="1" stop-color="#f8f8f8"/></linearGradient></defs>
<ellipse cx="18" cy="42" rx="16" ry="2" fill="#000" fill-opacity="0.15"/>
<rect x="0.5" y="0.5" width="35" height="41" rx="1.5" fill="#fff" stroke="#5c5c5c" stroke-width="1"/>
<rect x="2" y="2" width="32" height="38" fill="url(#tdg)"/>
<rect x="2" y="2" width="3.5" height="38" fill="#fff" fill-opacity="0.35"/>
<g stroke="#b4b4b4" stroke-width="1"><line x1="10" y1="6.5" x2="30" y2="6.5"/><line x1="10" y1="8.5" x2="30" y2="8.5"/><line x1="10" y1="10.5" x2="30" y2="10.5"/><line x1="10" y1="12.5" x2="30" y2="12.5"/><line x1="10" y1="14.5" x2="30" y2="14.5"/><line x1="10" y1="16.5" x2="30" y2="16.5"/><line x1="10" y1="18.5" x2="30" y2="18.5"/><line x1="10" y1="20.5" x2="30" y2="20.5"/><line x1="10" y1="22.5" x2="19.5" y2="22.5"/><line x1="10" y1="26.5" x2="30" y2="26.5"/><line x1="10" y1="28.5" x2="30" y2="28.5"/><line x1="10" y1="30.5" x2="30" y2="30.5"/><line x1="10" y1="32.5" x2="30" y2="32.5"/><line x1="10" y1="34.5" x2="24.5" y2="34.5"/></g>
<rect x="2.5" y="14" width="1" height="1" fill="#aaa"/><rect x="2.5" y="25" width="1" height="1" fill="#aaa"/></svg><div class="t" style="left:305.82px;top:354.17px;font-size:13.39px;line-height:13.39px;font-weight:normal;color:#1e1e1e;transform:scaleX(1.1101);transform-origin:0 0;">setup</div>
<div class="a" style="left:471px;top:65px;width:818px;height:514px;border:1px solid #6c6c6c;border-radius:5px 5px 0 0;background:#fdfdfd;box-shadow:0 4px 8px -2px rgba(0,0,0,0.45);"></div><div class="a" style="left:473px;top:67px;width:814px;height:27px;border-radius:4px 4px 0 0;background:linear-gradient(#fbfbfb,#f4f4f4 40%,#eeeeee);border-top:1px solid #fff"></div><div class="a" style="left:473px;top:94px;width:814px;height:24px;background:#e8e8e7"></div><svg class="a" style="left:476px;top:69px;overflow:visible" width="22" height="20" viewBox="0 0 22 20"><defs><linearGradient id="tsg" x1="0" y1="0" x2="0.3" y2="1"><stop offset="0" stop-color="#6f8a4e"/><stop offset="0.5" stop-color="#34481c"/><stop offset="1" stop-color="#0c1206"/></linearGradient>
<linearGradient id="tbz" x1="0" y1="0" x2="0" y2="1"><stop offset="0" stop-color="#e4e4e4"/><stop offset="1" stop-color="#b4b4b4"/></linearGradient></defs>
<rect x="0.5" y="0.5" width="21" height="19" rx="3" fill="url(#tbz)" stroke="#4e4e4e" stroke-width="1"/>
<rect x="2.5" y="2.5" width="17" height="13.5" fill="url(#tsg)" stroke="#111" stroke-width="1"/>
<g stroke="#b8d098" stroke-opacity="0.45" stroke-width="0.6"><line x1="3.5" y1="4.0" x2="18.5" y2="4.0"/><line x1="3.5" y1="5.5" x2="18.5" y2="5.5"/><line x1="3.5" y1="7.0" x2="18.5" y2="7.0"/><line x1="3.5" y1="8.5" x2="18.5" y2="8.5"/><line x1="3.5" y1="10.0" x2="18.5" y2="10.0"/><line x1="3.5" y1="11.5" x2="18.5" y2="11.5"/><line x1="3.5" y1="13.0" x2="18.5" y2="13.0"/></g>
<path d="M4 8.6 L7.6 10.6 L4 12.6" fill="none" stroke="#fff" stroke-width="1.1"/>
<rect x="7" y="13.6" width="5" height="1.2" fill="#fff"/>
<rect x="14" y="17" width="1.2" height="1.2" fill="#7fe060"/></svg><div class="t" style="left:741.40px;top:74.04px;font-size:12.36px;line-height:12.36px;font-weight:bold;color:#8a8a8a;transform:scaleX(1.1415);transform-origin:0 0;text-shadow:0 1px 0 rgba(255,255,255,0.7);">Terminal - cnc@Brix: ~/Desktop</div><div class="t" style="left:482.00px;top:99.27px;font-size:13.39px;line-height:13.39px;font-weight:normal;color:#939799;transform:scaleX(1.0083);transform-origin:0 0;">File</div><div class="t" style="left:518.40px;top:99.27px;font-size:13.39px;line-height:13.39px;font-weight:normal;color:#939799;transform:scaleX(1.0911);transform-origin:0 0;">Edit</div><div class="t" style="left:558.40px;top:99.27px;font-size:13.39px;line-height:13.39px;font-weight:normal;color:#939799;transform:scaleX(1.0719);transform-origin:0 0;">View</div><div class="t" style="left:603.40px;top:99.27px;font-size:13.39px;line-height:13.39px;font-weight:normal;color:#939799;transform:scaleX(1.0859);transform-origin:0 0;">Terminal</div><div class="t" style="left:672.40px;top:99.27px;font-size:13.39px;line-height:13.39px;font-weight:normal;color:#939799;transform:scaleX(1.0176);transform-origin:0 0;">Tabs</div><div class="t" style="left:716.30px;top:99.27px;font-size:13.39px;line-height:13.39px;font-weight:normal;color:#939799;transform:scaleX(1.0764);transform-origin:0 0;">Help</div><svg class="a" style="left:0;top:0;overflow:visible" width="1" height="1"><path d="M1207 76 L1211 80 L1208 80 L1208 84 L1206 84 L1206 80 L1203 80 Z" fill="#a8a8a8" stroke="#a8a8a8" stroke-width="0.6"/><rect x="1226" y="82" width="6" height="2" fill="#a8a8a8"/><rect x="1247" y="76.5" width="8" height="8" fill="none" stroke="#a8a8a8" stroke-width="1"/><rect x="1247" y="76" width="8" height="2" fill="#a8a8a8"/><path d="M1268.5 75.5 L1277.5 85 M1277.5 75.5 L1268.5 85" fill="none" stroke="#a8a8a8" stroke-width="1.6"/></svg><div class="a" style="left:474px;top:118px;width:802px;height:458px;background:#000"></div><div class="a" style="left:1276px;top:118px;width:4px;height:460px;background:#e9e9e9;border-left:1px solid #f8f8f8"></div><div class="a" style="left:472px;top:576px;width:808px;height:2px;background:#fafafa"></div><div class="m" style="left:475px;top:120px">64 bytes from 10.10.10.10: icmp_seq=0 ttl=64 time=0.592 ms
64 bytes from 10.10.10.10: icmp_seq=1 ttl=64 time=0.336 ms
64 bytes from 10.10.10.10: icmp_seq=2 ttl=64 time=0.323 ms
64 bytes from 10.10.10.10: icmp_seq=3 ttl=64 time=0.332 ms
64 bytes from 10.10.10.10: icmp_seq=4 ttl=64 time=0.322 ms
64 bytes from 10.10.10.10: icmp_seq=5 ttl=64 time=0.326 ms
64 bytes from 10.10.10.10: icmp_seq=6 ttl=64 time=0.317 ms
64 bytes from 10.10.10.10: icmp_seq=7 ttl=64 time=0.329 ms
64 bytes from 10.10.10.10: icmp_seq=8 ttl=64 time=0.315 ms
64 bytes from 10.10.10.10: icmp_seq=9 ttl=64 time=0.300 ms
64 bytes from 10.10.10.10: icmp_seq=10 ttl=64 time=0.314 ms
64 bytes from 10.10.10.10: icmp_seq=11 ttl=64 time=0.324 ms
64 bytes from 10.10.10.10: icmp_seq=12 ttl=64 time=0.311 ms
64 bytes from 10.10.10.10: icmp_seq=13 ttl=64 time=0.323 ms
64 bytes from 10.10.10.10: icmp_seq=14 ttl=64 time=0.321 ms
64 bytes from 10.10.10.10: icmp_seq=15 ttl=64 time=0.327 ms
64 bytes from 10.10.10.10: icmp_seq=16 ttl=64 time=0.310 ms
64 bytes from 10.10.10.10: icmp_seq=17 ttl=64 time=0.336 ms
64 bytes from 10.10.10.10: icmp_seq=18 ttl=64 time=0.324 ms
64 bytes from 10.10.10.10: icmp_seq=19 ttl=64 time=0.325 ms
^C--- 10.10.10.10 ping statistics ---
20 packets transmitted, 20 packets received, 0% packet loss
round-trip min/avg/max/stddev = 0.300/0.335/0.592/0.060 ms</div><div class="m" style="left:475px;top:557px;font-weight:bold"><span style="color:#55e455">cnc@Brix</span><span style="color:#fff;font-weight:normal">:</span><span style="color:#5c5cff">~/Desktop</span><span style="color:#fff;font-weight:normal">$ </span></div><div class="a" style="left:674px;top:555px;width:12px;height:21px;border:1px solid #00c000"></div>
<div class="a" style="left:283px;top:584px;width:820px;height:419px;border:1px solid #6c6c6c;border-radius:5px 5px 0 0;background:#fdfdfd;box-shadow:0 4px 8px -2px rgba(0,0,0,0.45);"></div><div class="a" style="left:285px;top:586px;width:816px;height:27px;border-radius:4px 4px 0 0;background:linear-gradient(#fbfbfb,#f4f4f4 40%,#eeeeee);border-top:1px solid #fff"></div><div class="a" style="left:285px;top:613px;width:816px;height:24px;background:#e8e8e7"></div><svg class="a" style="left:288px;top:588px;overflow:visible" width="22" height="20" viewBox="0 0 22 20"><defs><linearGradient id="tsg" x1="0" y1="0" x2="0.3" y2="1"><stop offset="0" stop-color="#6f8a4e"/><stop offset="0.5" stop-color="#34481c"/><stop offset="1" stop-color="#0c1206"/></linearGradient>
<linearGradient id="tbz" x1="0" y1="0" x2="0" y2="1"><stop offset="0" stop-color="#e4e4e4"/><stop offset="1" stop-color="#b4b4b4"/></linearGradient></defs>
<rect x="0.5" y="0.5" width="21" height="19" rx="3" fill="url(#tbz)" stroke="#4e4e4e" stroke-width="1"/>
<rect x="2.5" y="2.5" width="17" height="13.5" fill="url(#tsg)" stroke="#111" stroke-width="1"/>
<g stroke="#b8d098" stroke-opacity="0.45" stroke-width="0.6"><line x1="3.5" y1="4.0" x2="18.5" y2="4.0"/><line x1="3.5" y1="5.5" x2="18.5" y2="5.5"/><line x1="3.5" y1="7.0" x2="18.5" y2="7.0"/><line x1="3.5" y1="8.5" x2="18.5" y2="8.5"/><line x1="3.5" y1="10.0" x2="18.5" y2="10.0"/><line x1="3.5" y1="11.5" x2="18.5" y2="11.5"/><line x1="3.5" y1="13.0" x2="18.5" y2="13.0"/></g>
<path d="M4 8.6 L7.6 10.6 L4 12.6" fill="none" stroke="#fff" stroke-width="1.1"/>
<rect x="7" y="13.6" width="5" height="1.2" fill="#fff"/>
<rect x="14" y="17" width="1.2" height="1.2" fill="#7fe060"/></svg><div class="t" style="left:504.00px;top:593.04px;font-size:12.36px;line-height:12.36px;font-weight:bold;color:#1c1c1c;transform:scaleX(1.1535);transform-origin:0 0;text-shadow:0 1px 0 rgba(255,255,255,0.7);">Terminal - cnc@Brix: /etc/network/interfaces.d</div><div class="t" style="left:294.00px;top:618.27px;font-size:13.39px;line-height:13.39px;font-weight:normal;color:#3c4042;transform:scaleX(1.0083);transform-origin:0 0;">File</div><div class="t" style="left:330.40px;top:618.27px;font-size:13.39px;line-height:13.39px;font-weight:normal;color:#3c4042;transform:scaleX(1.0911);transform-origin:0 0;">Edit</div><div class="t" style="left:370.40px;top:618.27px;font-size:13.39px;line-height:13.39px;font-weight:normal;color:#3c4042;transform:scaleX(1.0719);transform-origin:0 0;">View</div><div class="t" style="left:415.40px;top:618.27px;font-size:13.39px;line-height:13.39px;font-weight:normal;color:#3c4042;transform:scaleX(1.0859);transform-origin:0 0;">Terminal</div><div class="t" style="left:484.40px;top:618.27px;font-size:13.39px;line-height:13.39px;font-weight:normal;color:#3c4042;transform:scaleX(1.0176);transform-origin:0 0;">Tabs</div><div class="t" style="left:528.30px;top:618.27px;font-size:13.39px;line-height:13.39px;font-weight:normal;color:#3c4042;transform:scaleX(1.0764);transform-origin:0 0;">Help</div><div class="a" style="left:1006px;top:585px;width:96px;height:26px;border-radius:0 5px 0 5px;background:linear-gradient(#d6d6d6,#cfcfcf 45%,#c4c4c4 60%,#c9c9c9);border-left:1px solid #b8b8b8;border-bottom:1px solid #b4b4b4"></div><svg class="a" style="left:0;top:0;overflow:visible" width="1" height="1"><path d="M1021 594 L1026 599 L1022.8 599 L1022.8 603.5 L1019.2 603.5 L1019.2 599 L1016 599 Z" fill="#fff" stroke="#6f6f6f" stroke-width="1" stroke-linejoin="round"/><rect x="1039.5" y="600.5" width="7" height="3" fill="#fff" stroke="#6f6f6f" stroke-width="1"/><rect x="1060.5" y="594.5" width="9" height="9" fill="none" stroke="#6f6f6f" stroke-width="1"/><rect x="1061.75" y="595.75" width="6.5" height="6.5" fill="none" stroke="#fff" stroke-width="1.5"/><rect x="1063" y="597" width="4" height="4" fill="#cdcdcd" stroke="#6f6f6f" stroke-width="1"/><path d="M1083 594 L1091 604 M1091 594 L1083 604" fill="none" stroke="#6f6f6f" stroke-width="4.4"/><path d="M1083 594 L1091 604 M1091 594 L1083 604" fill="none" stroke="#fff" stroke-width="2.4"/></svg><div class="a" style="left:286px;top:637px;width:802px;height:363px;background:#000"></div><div class="a" style="left:1088px;top:637px;width:12px;height:363px;background:#cdcdcd;border-left:1px solid #e0e0e0"></div><div class="a" style="left:1091px;top:640px;width:6px;height:357px;background:#7b7e80;border-radius:3px"></div><div class="a" style="left:1100px;top:613px;width:2px;height:387px;background:#fafafa"></div><div class="a" style="left:284px;top:1000px;width:818px;height:2px;background:#fafafa"></div><div class="a" style="left:284px;top:613px;width:2px;height:387px;background:#fafafa"></div><div class="a" style="left:287px;top:638px;width:801px;height:19px;background:#fff"></div><div class="m" style="left:287px;top:639px;color:#000;">  GNU nano 2.7.4                     File: setup</div><div class="m" style="left:287px;top:677px;color:#fff;">auto lo</div><div class="m" style="left:287px;top:696px;color:#fff;">iface lo inet loopback</div><div class="m" style="left:287px;top:734px;color:#fff;">auto eth0</div><div class="m" style="left:287px;top:753px;color:#fff;">iface eth0 inet dhcp</div><div class="m" style="left:287px;top:791px;color:#fff;">auto eno1</div><div class="m" style="left:287px;top:810px;color:#fff;">iface eno1 inet static</div><div class="m" style="left:287px;top:829px;color:#fff;">address 10.10.10.1</div><div class="m" style="left:287px;top:848px;color:#fff;">netmask 255.255.255.0</div><div class="m" style="left:287px;top:886px;color:#fff;">hardware-irq-coalesce-rx-usecs 0</div><div class="a" style="left:287px;top:676px;width:10px;height:19px;background:#00b400"></div><div class="m" style="left:287px;top:677px;color:#000;">a</div><div class="a" style="left:597px;top:942px;width:170px;height:19px;background:#fff"></div><div class="m" style="left:597px;top:943px;color:#000;">[ Read 12 lines ]</div><div class="a" style="left:287px;top:961px;width:20px;height:19px;background:#fff"></div><div class="m" style="left:287px;top:962px;color:#000;">^G</div><div class="m" style="left:317px;top:962px;color:#fff;">Get Help</div><div class="a" style="left:417px;top:961px;width:20px;height:19px;background:#fff"></div><div class="m" style="left:417px;top:962px;color:#000;">^O</div><div class="m" style="left:447px;top:962px;color:#fff;">Write Out</div><div class="a" style="left:547px;top:961px;width:20px;height:19px;background:#fff"></div><div class="m" style="left:547px;top:962px;color:#000;">^W</div><div class="m" style="left:577px;top:962px;color:#fff;">Where Is</div><div class="a" style="left:677px;top:961px;width:20px;height:19px;background:#fff"></div><div class="m" style="left:677px;top:962px;color:#000;">^K</div><div class="m" style="left:707px;top:962px;color:#fff;">Cut Text</div><div class="a" style="left:807px;top:961px;width:20px;height:19px;background:#fff"></div><div class="m" style="left:807px;top:962px;color:#000;">^J</div><div class="m" style="left:837px;top:962px;color:#fff;">Justify</div><div class="a" style="left:937px;top:961px;width:20px;height:19px;background:#fff"></div><div class="m" style="left:937px;top:962px;color:#000;">^C</div><div class="m" style="left:967px;top:962px;color:#fff;">Cur Pos</div><div class="a" style="left:287px;top:980px;width:20px;height:19px;background:#fff"></div><div class="m" style="left:287px;top:981px;color:#000;">^X</div><div class="m" style="left:317px;top:981px;color:#fff;">Exit</div><div class="a" style="left:417px;top:980px;width:20px;height:19px;background:#fff"></div><div class="m" style="left:417px;top:981px;color:#000;">^R</div><div class="m" style="left:447px;top:981px;color:#fff;">Read File</div><div class="a" style="left:547px;top:980px;width:20px;height:19px;background:#fff"></div><div class="m" style="left:547px;top:981px;color:#000;">^\</div><div class="m" style="left:577px;top:981px;color:#fff;">Replace</div><div class="a" style="left:677px;top:980px;width:20px;height:19px;background:#fff"></div><div class="m" style="left:677px;top:981px;color:#000;">^U</div><div class="m" style="left:707px;top:981px;color:#fff;">Uncut Text</div><div class="a" style="left:807px;top:980px;width:20px;height:19px;background:#fff"></div><div class="m" style="left:807px;top:981px;color:#000;">^T</div><div class="m" style="left:837px;top:981px;color:#fff;">To Spell</div><div class="a" style="left:937px;top:980px;width:20px;height:19px;background:#fff"></div><div class="m" style="left:937px;top:981px;color:#000;">^_</div><div class="m" style="left:967px;top:981px;color:#fff;">Go To Line</div>
<div class="a" style="left:863px;top:0;width:398px;height:48px;background:#edecea;border-left:1px solid #fff;border-bottom:1px solid #c9c8c5;border-right:1px solid #d0d0d0"></div><svg class="a" style="left:0;top:0;overflow:visible" width="1" height="1"><rect x="868" y="12" width="1" height="1" fill="#9a9a9a"/><rect x="871" y="12" width="1" height="1" fill="#9a9a9a"/><rect x="868" y="15" width="1" height="1" fill="#9a9a9a"/><rect x="871" y="15" width="1" height="1" fill="#9a9a9a"/><rect x="868" y="18" width="1" height="1" fill="#9a9a9a"/><rect x="871" y="18" width="1" height="1" fill="#9a9a9a"/><rect x="868" y="21" width="1" height="1" fill="#9a9a9a"/><rect x="871" y="21" width="1" height="1" fill="#9a9a9a"/><rect x="868" y="24" width="1" height="1" fill="#9a9a9a"/><rect x="871" y="24" width="1" height="1" fill="#9a9a9a"/><rect x="868" y="27" width="1" height="1" fill="#9a9a9a"/><rect x="871" y="27" width="1" height="1" fill="#9a9a9a"/><rect x="868" y="30" width="1" height="1" fill="#9a9a9a"/><rect x="871" y="30" width="1" height="1" fill="#9a9a9a"/><rect x="1250" y="12" width="1" height="1" fill="#9a9a9a"/><rect x="1253" y="12" width="1" height="1" fill="#9a9a9a"/><rect x="1250" y="15" width="1" height="1" fill="#9a9a9a"/><rect x="1253" y="15" width="1" height="1" fill="#9a9a9a"/><rect x="1250" y="18" width="1" height="1" fill="#9a9a9a"/><rect x="1253" y="18" width="1" height="1" fill="#9a9a9a"/><rect x="1250" y="21" width="1" height="1" fill="#9a9a9a"/><rect x="1253" y="21" width="1" height="1" fill="#9a9a9a"/><rect x="1250" y="24" width="1" height="1" fill="#9a9a9a"/><rect x="1253" y="24" width="1" height="1" fill="#9a9a9a"/><rect x="1250" y="27" width="1" height="1" fill="#9a9a9a"/><rect x="1253" y="27" width="1" height="1" fill="#9a9a9a"/><rect x="1250" y="30" width="1" height="1" fill="#9a9a9a"/><rect x="1253" y="30" width="1" height="1" fill="#9a9a9a"/></svg><div class="a" style="left:882px;top:5px;width:38px;height:36px;border:1px solid #7d7d7d;border-radius:5px;background:linear-gradient(#e9e9e9,#dedede 30%,#e3e3e3 70%,#ececec)"></div><div class="a" style="left:885px;top:13px;width:32px;height:22px;background:linear-gradient(#dcdcdc,#e4e4e4)"></div><svg class="a" style="left:0;top:0;overflow:visible" width="1" height="1"><path d="M894 18 L909 28.5 M908.5 17.5 L894.5 29" stroke="#d40000" stroke-width="3" stroke-linecap="round"/></svg><svg class="a" style="left:926px;top:0px;overflow:visible" width="46" height="46" viewBox="0 0 46 46"><defs><linearGradient id="xg" x1="0" y1="0" x2="1" y2="1"><stop offset="0" stop-color="#f2fbfe"/><stop offset="0.45" stop-color="#9ad8f0"/><stop offset="1" stop-color="#4cb8e2"/></linearGradient></defs>
<path d="M13.5 4 L23.3 14.5 L32.5 4.5 L40 12 L30 22.5 L40.5 34.5 L33 42 L23 32 L12.5 42.5 L5 35.5 L15 25 L5.5 12 Z" fill="url(#xg)" stroke="#7ecbe8" stroke-width="0.6" stroke-linejoin="round"/>
<path d="M4 14.5 C8 16 11 18 13.5 20.5 C16 20 22 20 26.5 20.5 L27 16 C27.5 14.5 29 14.5 29.5 16.5 L30.5 14 C31.5 13 33 13.5 33 15 L33 18 C37 18 40.5 20 41 22 C41 24 38 25.5 34.5 26 L34 28 L35.5 30 L32.5 32 L30 31 L16 31 L13.5 33.5 L11.5 31 L12.5 26 C12 24 12.5 22 13.5 21.5 C10.5 19 7 16.5 4 15.5Z" fill="#000"/>
<circle cx="33" cy="21" r="0.8" fill="#555"/></svg><div class="t" style="left:971.70px;top:17.17px;font-size:13.39px;line-height:13.39px;font-weight:normal;color:#1a1a1a;transform:scaleX(1.0999);transform-origin:0 0;">Applications</div><svg class="a" style="left:1063px;top:10px;overflow:visible" width="36" height="28" viewBox="0 0 36 28"><defs><linearGradient id="pdg" x1="0" y1="0" x2="0" y2="1"><stop offset="0" stop-color="#ececf6"/><stop offset="1" stop-color="#b8b8cc"/></linearGradient></defs>
<ellipse cx="18" cy="26.5" rx="17" ry="1.5" fill="#000" fill-opacity="0.2"/>
<path d="M6 0.5 L30 0.5 L35 15 L1 15 Z" fill="url(#pdg)" stroke="#8d8da5" stroke-width="1"/>
<rect x="0.5" y="15" width="35" height="11" rx="2" fill="#e4e4ea" stroke="#8d8da5" stroke-width="1"/>
<rect x="5" y="19" width="8" height="3" fill="#a0a0a0"/><circle cx="30" cy="21" r="1" fill="#3ecf3e"/></svg><svg class="a" style="left:1117px;top:8px;overflow:visible" width="27" height="34" viewBox="0 0 27 34"><defs><linearGradient id="cbg" x1="0" y1="0" x2="0" y2="1"><stop offset="0" stop-color="#f2b453"/><stop offset="1" stop-color="#b06c08"/></linearGradient></defs>
<ellipse cx="14" cy="32" rx="14" ry="2" fill="#000" fill-opacity="0.2"/>
<path d="M2 3 Q2 0.5 5 0.5 L22 0.5 Q25 0.5 25 3 L26 32 L1 32 Z" fill="url(#cbg)" stroke="#7a4a06" stroke-width="1"/>
<rect x="4" y="6" width="19" height="10" rx="1" fill="#d68e1c" stroke="#8a5608" stroke-width="0.8"/>
<rect x="4" y="18" width="19" height="11" rx="1" fill="#d08818" stroke="#8a5608" stroke-width="0.8"/>
<rect x="10.5" y="11" width="6" height="3" fill="none" stroke="#7a4a06" stroke-width="0.8"/>
<rect x="10.5" y="24" width="6" height="3" fill="none" stroke="#7a4a06" stroke-width="0.8"/></svg><div class="a" style="left:1155px;top:0;width:48px;height:47px;border:1px solid #8e8c8a;border-top:1px solid #9a9896;background:linear-gradient(#d2d0ce,#dddcda);box-shadow:inset 0 -1px 0 #fff, inset -1px 0 0 #fff"></div><svg class="a" style="left:1152px;top:0px;overflow:visible" width="54" height="50" viewBox="0 0 54 50"><defs><linearGradient id="camg" x1="0" y1="0" x2="0" y2="1"><stop offset="0" stop-color="#bcbcbc"/><stop offset="0.3" stop-color="#5a5a5a"/><stop offset="1" stop-color="#2e2e2e"/></linearGradient></defs>
<rect x="11.5" y="6.5" width="35" height="29" rx="2" fill="#e6e6e6" stroke="#4d7ec0" stroke-width="1.2"/>
<rect x="12.5" y="7.5" width="33" height="3.5" fill="#3c6eaf"/>
<rect x="42" y="8" width="2.5" height="2.5" fill="#c8d4e4"/>
<rect x="12.5" y="12" width="33" height="4" fill="#cfd0cc"/>
<rect x="29" y="12.5" width="7" height="4" rx="1" fill="#e8e8e4"/>
<rect x="14" y="17.5" width="26" height="15.5" fill="#fff" stroke="#c8c8c8" stroke-width="0.5"/>
<rect x="42" y="17.5" width="3" height="15" fill="#d0d0cc"/><rect x="42.2" y="20" width="2.6" height="6" rx="1.2" fill="#5a90d8"/>
<path d="M42.3 19 L43.5 17.5 L44.7 19Z M42.3 31.5 L43.5 33 L44.7 31.5Z" fill="#333"/>
<ellipse cx="20" cy="42.5" rx="11" ry="1.6" fill="#000" fill-opacity="0.2"/>
<rect x="8.5" y="22.5" width="23" height="19.5" rx="2.5" fill="url(#camg)" stroke="#777" stroke-width="0.8"/>
<rect x="10" y="23.5" width="8" height="3" fill="#e0e0e0" fill-opacity="0.6"/>
<path d="M9 33 L16 33" stroke="#ccc" stroke-width="0.6"/>
<circle cx="22.5" cy="34" r="5.2" fill="#d8d8d8" stroke="#9a9a9a" stroke-width="0.6"/>
<circle cx="23" cy="35" r="2.6" fill="#0a1e50"/><circle cx="22.5" cy="34.3" r="1" fill="#2a5ab0"/>
<rect x="28" y="38" width="3" height="3" fill="#f0a020"/>
<path d="M26 15 L26 31.5 L29.5 28 L32.5 34 L35 32.8 L32.2 27 L37.5 27 Z" fill="#000" stroke="#fff" stroke-width="1.1" stroke-linejoin="round"/></svg><div class="t" style="left:1207.00px;top:16.67px;font-size:13.39px;line-height:13.39px;font-weight:normal;color:#1a1a1a;transform:scaleX(1.1182);transform-origin:0 0;">22:25</div>
</body></html>
